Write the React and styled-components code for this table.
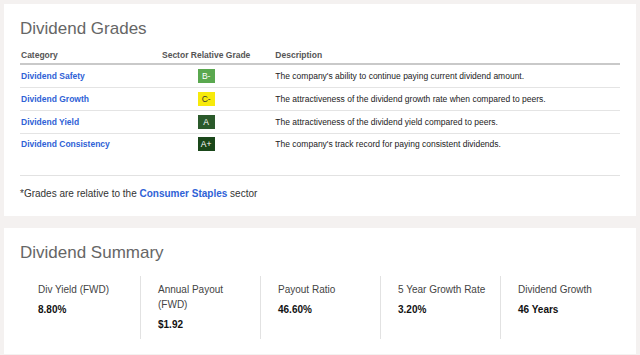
import React from "react";
import styled, { createGlobalStyle } from "styled-components";

const GlobalStyle = createGlobalStyle`
  html, body {
    margin: 0;
    padding: 0;
    background: #f4f1f0;
    font-family: "Liberation Sans", Arial, sans-serif;
  }
`;

const Page = styled.div`
  display: flex;
  flex-direction: column;
  gap: 12px;
  padding: 4px;
  width: 632px;
`;

const Card = styled.section`
  background: #ffffff;
  padding: 15px 16px ${(p) => p.$padBottom || 14}px 16px;
`;

const Title = styled.h2`
  margin: 0;
  font-size: 17px;
  line-height: 20px;
  font-weight: 400;
  color: #666;
`;

const Table = styled.table`
  width: 600px;
  margin-top: 2px;
  border-collapse: collapse;
  font-size: 8.5px;
`;

const HeadCell = styled.th`
  height: 19px;
  padding: 0 0 3px ${(p) => p.$indent || 0}px;
  text-align: ${(p) => p.$align || "left"};
  vertical-align: bottom;
  white-space: nowrap;
  font-weight: 700;
  color: #555;
  border-bottom: 2px solid #c9c9c9;
  width: ${(p) => p.$w || "auto"};
`;

const Row = styled.tr`
  height: ${(p) => (p.$last ? 22 : 23)}px;
  border-bottom: ${(p) => (p.$last ? "none" : "1px solid #e4e4e4")};
`;

const Cell = styled.td`
  padding: 0 0 0 ${(p) => p.$indent || 0}px;
  text-align: ${(p) => p.$align || "left"};
  vertical-align: middle;
  white-space: nowrap;
  color: #222;
`;

const CategoryLink = styled.a`
  color: #2f62d6;
  font-weight: 700;
  text-decoration: none;
`;

const Badge = styled.span`
  display: inline-flex;
  align-items: center;
  justify-content: center;
  width: 17px;
  height: 14px;
  background: ${(p) => p.$bg};
  color: ${(p) => p.$fg};
  font-size: 8.5px;
  vertical-align: middle;
`;

const Rule = styled.div`
  margin-top: 20px;
  height: 1px;
  background: #e2e2e2;
`;

const Note = styled.p`
  margin: 11px 0 0 0;
  font-size: 10px;
  line-height: 14px;
  color: #333;
`;

const NoteLink = styled.a`
  color: #2f62d6;
  font-weight: 700;
  text-decoration: none;
`;

const Stats = styled.div`
  display: grid;
  grid-template-columns: repeat(5, 120px);
  margin-top: 13px;
`;

const Stat = styled.div`
  display: flex;
  flex-direction: column;
  gap: 5px;
  padding: 6px 8px 7px ${(p) => (p.$first ? 18 : 17)}px;
  border-left: ${(p) => (p.$first ? "none" : "1px solid #e2e2e2")};
`;

const StatLabel = styled.div`
  font-size: 10px;
  line-height: 15px;
  color: #444;
`;

const StatValue = styled.div`
  font-size: 10px;
  line-height: 15px;
  font-weight: 700;
  color: #111;
`;

const grades = [
  {
    name: "Dividend Safety",
    grade: "B-",
    bg: "#5aa84f",
    fg: "#ffffff",
    text: "The company's ability to continue paying current dividend amount.",
  },
  {
    name: "Dividend Growth",
    grade: "C-",
    bg: "#f7ea0b",
    fg: "#333333",
    text: "The attractiveness of the dividend growth rate when compared to peers.",
  },
  {
    name: "Dividend Yield",
    grade: "A",
    bg: "#2b5a2b",
    fg: "#ffffff",
    text: "The attractiveness of the dividend yield compared to peers.",
  },
  {
    name: "Dividend Consistency",
    grade: "A+",
    bg: "#1a471a",
    fg: "#ffffff",
    text: "The company's track record for paying consistent dividends.",
  },
];

const summary = [
  { label: "Div Yield (FWD)", value: "8.80%" },
  { label: "Annual Payout (FWD)", value: "$1.92" },
  { label: "Payout Ratio", value: "46.60%" },
  { label: "5 Year Growth Rate", value: "3.20%" },
  { label: "Dividend Growth", value: "46 Years" },
];

export default function App() {
  return (
    <>
      <GlobalStyle />
      <Page>
        <Card $padBottom={15}>
          <Title>Dividend Grades</Title>
          <Table>
            <thead>
              <tr>
                <HeadCell $w="141px" $indent={1}>Category</HeadCell>
                <HeadCell $w="88px" $align="center">
                  Sector Relative Grade
                </HeadCell>
                <HeadCell $indent={25}>Description</HeadCell>
              </tr>
            </thead>
            <tbody>
              {grades.map((g, i) => (
                <Row key={g.name} $last={i === grades.length - 1}>
                  <Cell $indent={1}>
                    <CategoryLink href="#">{g.name}</CategoryLink>
                  </Cell>
                  <Cell $align="center">
                    <Badge $bg={g.bg} $fg={g.fg}>
                      {g.grade}
                    </Badge>
                  </Cell>
                  <Cell $indent={25}>{g.text}</Cell>
                </Row>
              ))}
            </tbody>
          </Table>
          <Rule />
          <Note>
            *Grades are relative to the <NoteLink href="#">Consumer Staples</NoteLink> sector
          </Note>
        </Card>
        <Card $padBottom={15}>
          <Title>Dividend Summary</Title>
          <Stats>
            {summary.map((s, i) => (
              <Stat key={s.label} $first={i === 0}>
                <StatLabel>{s.label}</StatLabel>
                <StatValue>{s.value}</StatValue>
              </Stat>
            ))}
          </Stats>
        </Card>
      </Page>
    </>
  );
}
